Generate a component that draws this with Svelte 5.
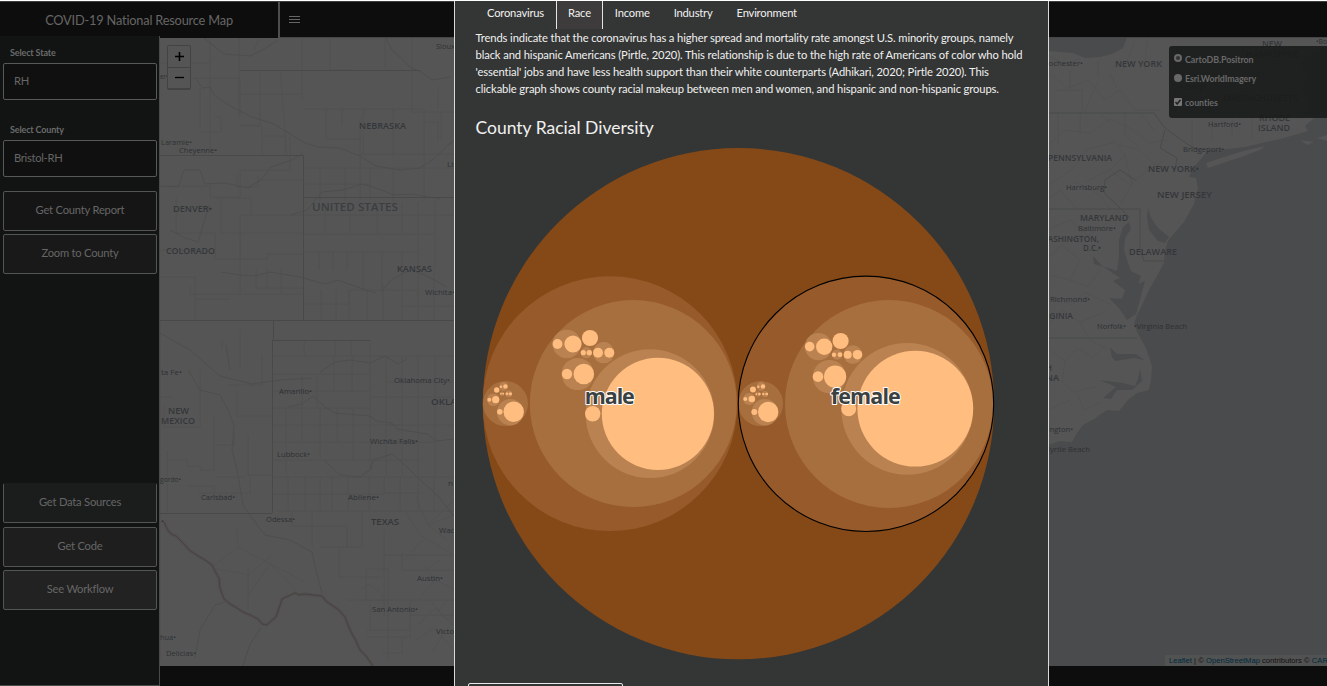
<script>
  const tabs = ['Coronavirus', 'Race', 'Income', 'Industry', 'Environment'];
  const lines = [
    'Trends indicate that the coronavirus has a higher spread and mortality rate amongst U.S. minority groups, namely',
    'black and hispanic Americans (Pirtle, 2020). This relationship is due to the high rate of Americans of color who hold',
    "'essential' jobs and have less health support than their white counterparts (Adhikari, 2020; Pirtle 2020). This",
    'clickable graph shows county racial makeup between men and women, and hispanic and non-hispanic groups.'
  ];

  const shades = ['#854918', '#965a2b', '#a86f3e', '#b98250', '#ffbd80'];

  // [cx, cy, r, depth]
  const circles = [
    [738.5, 403.7, 255.6, 0],
    [610, 403.7, 127.4, 1], [633.3, 403.6, 103.5, 2], [505.5, 403.6, 22.5, 2],
    [650, 413.7, 64.4, 3], [657.9, 413.8, 56.1, 4], [592.7, 413.8, 7.7, 4],
    [566.8, 344, 14.3, 3], [557.5, 344, 4.9, 4], [573, 344, 8.6, 4], [590, 338, 8.1, 4],
    [586.3, 352.7, 5.6, 3], [583.3, 352.7, 2.6, 4], [589.3, 352.7, 2.7, 4],
    [603.7, 352.7, 10.6, 3], [598, 352.7, 5, 4], [609.3, 352.7, 5, 4],
    [577.7, 374, 16.1, 3], [567, 374, 5.2, 4], [583.8, 374, 10.3, 4],
    [510.3, 412.2, 13.3, 3], [499.8, 411.8, 2.8, 4], [513.7, 411.8, 10.2, 4],
    [496.7, 390, 2.7, 4], [493.3, 399.7, 6.3, 3], [489.3, 399.8, 2, 4], [495.7, 399.7, 3.6, 4],
    [503.6, 386.4, 4.4, 3], [501, 386.7, 1.2, 4], [505.4, 386.4, 2.2, 4],
    [502, 393.7, 2.3, 3], [501, 393.7, 0.9, 4], [503.2, 393.7, 0.9, 4],
    [508.7, 393.8, 3.5, 3], [507, 393.8, 1.4, 4], [510.4, 393.8, 1.6, 4],
    [866, 403.8, 127.6, 1], [889, 404, 104, 2], [760.6, 403.6, 22.5, 2],
    [907.2, 408.8, 65.9, 3], [915.3, 408.7, 57.9, 4], [848.7, 408.7, 7.5, 4],
    [818.4, 346.6, 13.7, 3], [809.7, 346.6, 4.8, 4], [824.2, 346.8, 8.2, 4], [840.6, 341, 8.1, 4],
    [837, 354.7, 5.1, 3], [834, 354.7, 2.2, 4], [840, 354.7, 2.4, 4],
    [852.9, 354.7, 9.4, 3], [847.7, 354.7, 4, 4], [857.5, 354.7, 4.8, 4],
    [829.4, 376.6, 16.7, 3], [818, 376.6, 5.3, 4], [835.1, 376.6, 11.1, 4],
    [765, 412.2, 13.2, 3], [754.3, 412, 3, 4], [768.2, 412, 10.2, 4],
    [753, 389.5, 3, 4], [749.2, 399, 6.1, 3], [745.3, 399, 2, 4], [751.8, 399, 3.3, 4],
    [761, 386.4, 4.3, 3], [758.3, 386.7, 1.2, 4], [763, 386.4, 2.2, 4],
    [757.7, 394.1, 2.6, 3], [756.3, 394.1, 0.9, 4], [759.4, 394.1, 1.4, 4],
    [765, 394.1, 3.1, 3], [763.3, 394.1, 1.2, 4], [766.7, 394.1, 1.4, 4]
  ];

  // [text, x, baseline, width, kind]
  const labels = [
    ['Laramie•', 161, 145, 31, 's'], ['Cheyenne•', 179, 153, 38, 's'], ['er•', 160, 79, 8, 's'],
    ['NEBRASKA', 359, 128.5, 47, 'm'], ['Sioux', 436, 49, 19, 's'], ['Lin', 447, 167, 11, 's'],
    ['DENVER•', 173, 211.5, 39, 'm'], ['COLORADO', 166, 254, 49, 'm'],
    ['UNITED STATES', 312, 211, 86, 'l'], ['KANSAS', 397, 272, 35, 'm'], ['Wichita•', 425, 295, 30, 's'],
    ['ta Fe•', 161, 375, 21, 's'], ['Amarillo•', 279, 393.5, 33, 's'], ['Oklahoma City•', 394, 383, 56, 's'],
    ['OKLAHOMA', 431, 404.5, 56, 'm'], ['NEW', 168, 413.5, 21, 'm'], ['MEXICO', 161, 423.5, 34, 'm'],
    ['Wichita Falls•', 370, 443.5, 48, 's'], ['Lubbock•', 277, 457, 33, 's'], ['gordo•', 160, 482, 21, 's'],
    ['Carlsbad•', 201, 500, 34, 's'], ['Abilene•', 348, 499.5, 31, 's'], ['n', 448, 486, 5, 's'],
    ['Odessa•', 266, 522, 29, 's'], ['TEXAS', 371, 524.5, 28, 'm'], ['Waco', 439, 533, 20, 's'],
    ['Austin•', 417, 580.5, 26, 's'], ['San Antonio•', 372, 612, 46, 's'], ['Victoria', 436, 633.5, 28, 's'],
    ['hua•', 160, 640, 16, 's'], ['Delicias•', 166, 656, 30, 's'], ['•', 161, 524, 3, 's'],
    ['Rochester•', 1044, 66, 39, 's'], ['NEW YORK', 1115, 66.5, 47, 'm'], ['NEW', 1262, 46.5, 20, 'm'],
    ['HAMPSHIRE', 1246, 57, 52, 'm'], ['•Bo', 1316, 44, 11, 's'], ['Albany•', 1179, 88.5, 27, 's'],
    ['MASSACHUSETTS', 1223, 101, 75, 'm'], ['RHODE', 1259, 120.5, 31, 'm'], ['ISLAND', 1258, 130.5, 32, 'm'],
    ['Hartford•', 1208, 126.5, 33, 's'], ['Bridgeport•', 1183, 152, 41, 's'], ['PENNSYLVANIA', 1048, 160.5, 64, 'm'],
    ['NEW YORK•', 1148, 171.5, 51, 'm'], ['Harrisburg•', 1066, 190, 41, 's'], ['NEW JERSEY', 1157, 198, 55, 'm'],
    ['MARYLAND', 1080, 221, 48, 'm'], ['Baltimore•', 1078, 230.5, 38, 's'], ['WASHINGTON,', 1040, 242, 59, 'm'],
    ['D.C.•', 1083, 251, 18, 'm'], ['DELAWARE', 1129, 254.5, 48, 'm'], ['Richmond•', 1050, 301.5, 40, 's'],
    ['VIRGINIA', 1036, 318.5, 37, 'm'], ['Norfolk•', 1097, 329, 29, 's'], ['•Virginia Beach', 1134, 329, 53, 's'],
    ['NORTH', 1024, 371, 28, 'm'], ['CAROLINA', 1013, 381, 46, 'm'], ['Wilmington•', 1030, 432, 43, 's'], ['Myrtle Beach', 1043, 452, 47, 's']
  ];
  const sizes = { s: 7.4, m: 8.2, l: 10 };

  const counties = [
    'M160 63H210M210 38V150M239 38V117M259 38L254 50M302 38V100M330 38V70H353M360 117V200M385 38V68M412 38V112H454M160 78H240V117M215 117H221V132H200M200 88V128M260 70V125H240M280 70L287 155M240 94H300M240 126H262V155M303 109H424V155M326 109V139H362M342 109V126M363 109V155M393 110V155M361 154H454M424 122H438V141M441 112V140M438 89V110M262 136H285V155',
    'M168 186H210V197H240V170H290V137M237 175V187H258V176M176 197V233H215V259H240V215H251V198H216M221 198V233H303M251 215H303M260 180H303M240 233V294M160 250H198M240 259H267V254H303M256 268V288H303M267 268V288M281 268V293M190 286V294H303M160 277H195V320M195 299H230M160 320V660',
    'M320 167V201M345 167V201M370 167V200M304 168H454M304 184H370M393 168V201M424 155V201M304 215H454M325 202V234M350 202V234M377 202V234M402 202V234M418 202V252H304M304 234H434M435 201V268M319 252V270M333 252V270M347 252V270M363 252V290M382 252V290M402 252V320M418 252V290H349V304H304M321 290V320M336 290V320M349 290V320M367 290V320M383 285V320M400 306H454M418 290V320M434 271V320',
    'M273 356H454M335 340V356M351 340V356M370 340V470M304 340V355M273 374H370M302 374V408M317 374V408M334 357V392M352 357V392M273 391H370M273 408H370M286 409V477M302 409V442M320 409V459M337 409V442M353 409V459M273 425H402M273 442H370M273 460H420M273 477H454M386 357V477M402 357V477M418 357V511M435 357V477M386 382H454M370 397H454M386 425H454M386 442H435',
    'M288 477V511M305 477V511M320 477V511M332 477V511M348 477V511M369 477V510M384 477V493H420M400 477V511M434 477V511M273 494H384M277 511H454M292 511V526H328M312 511V548M328 526H347V548M362 511V547H320M347 530V548M384 530V616M339 547V577H382M366 570V600H388V569H366M402 553V570H454M382 555H454M347 600H454M388 600V660M366 630H410M366 637H410V600M410 615H454M370 605V630M402 637V653H382',
    'M164 405V427H200V392M240 330V368M222 340V350M262 355V385H228M200 370V397M214 415V470H200V466H187V460H167M167 450V512M237 390V416H272M216 445H234V432M160 397H173M248 435V475H273M198 493H250V474M215 477H246M187 486H214V496H237'
  ];
  const diagonals = [
    'M248 596L270 564L298 591M237 528L238 547L212 567M238 547L305 582M248 567V610M213 568L248 575L272 555M405 511L420 535L454 555M415 495L428 525L447 540M423 540L404 560M428 525L454 515M418 600L435 580L454 589M435 580L423 565M430 600L447 620L454 614M418 625L435 608L454 625M416 640L434 628L454 650M432 653L443 635M440 560L425 570M447 600L437 612M433 520L454 500M360 590L369 584L382 594V600'
  ];
  const rivers = [
    'M196 78L202 88L210 87L214 95L232 107L252 117L274 124L292 135L305 143L318 147L340 148L360 156L376 166L400 170L420 168L435 158L449 144L457 139',
    'M160 186L178 187L184 170L200 170L205 184L225 183L248 188L261 180L271 167L292 160L303 153M209 205L202 229L198 242L185 238L170 230',
    'M291 215L307 210L322 192L343 190L362 184L376 188L394 195L412 194L440 199',
    'M221 272L240 275L255 276L270 272L300 277L325 284L338 280L357 287L376 293M381 292L391 280L410 270L425 275L447 287',
    'M204 38L224 54L250 56L264 49L278 40M386 38L392 50L400 57L410 67L421 72L432 80L450 77',
    'M226 345L230 370M188 370L200 390L220 395L228 410L234 425L232 450L237 470L243 505L257 525L265 535L290 540L312 552L315 567L322 593',
    'M160 333L190 350L220 376L252 384L280 380L312 378M288 407L302 404L313 396L325 407L335 413L370 416L376 421L392 423L397 429L427 434L437 441L454 439',
    'M324 460L340 475L360 477L371 469L373 460L392 454L405 465L417 477L436 494L454 516',
    'M195 658L200 630L215 605L225 602M261 628L250 644L243 666M320 372L335 362L350 360L370 363L385 356L398 364L407 359'
  ];
  const eastLines = [
    'M1048 72L1068 88L1088 80L1105 100L1120 90L1135 110L1160 110M1048 145L1065 130L1090 133L1110 119L1130 128L1150 143L1168 140M1058 112V145M1080 113V134M1100 114L1110 122M1048 185L1072 170L1085 150L1115 142L1125 155L1110 170L1085 182M1110 170L1130 185L1145 172L1165 160M1118 145L1140 150L1160 170M1125 155L1132 185L1120 205M1048 200L1060 190L1076 208M1075 182L1100 195L1110 209',
    'M1048 230L1070 220L1088 236L1105 225M1048 258L1062 245L1080 260L1070 280L1050 275M1070 280L1088 287L1100 270M1048 295L1072 305L1085 292L1112 305M1048 325L1062 310L1080 322L1105 312M1080 322L1090 340L1107 349M1049 350L1065 361L1062 381L1073 392L1098 386M1065 361L1078 348L1093 358L1105 345M1078 395L1084 410L1100 402M1048 410L1070 400M1098 61V76M1110 73L1117 88M1097 83L1085 111M1192 120V147M1212 120V140M1232 118V138M1252 118V138',
    'M1135 41L1122 72M1147 38L1145 70M1048 55L1066 65L1080 58M1056 90H1082V112M1070 70V90M1125 112V135L1140 148M1140 112L1155 132'
  ];
  const rioGrande = 'M164 522L167 529L171 534L176 536L183 543L189 550L198 556L205 560L212 565L216 573L219 578L220 588L224 599L230 604L237 608L243 612L250 615L258 619L262 624L267 625L271 621L276 617L279 608L282 599L286 597L295 593L299 595L304 594L313 595L322 596L327 602L333 606L339 610L345 617L348 625L351 632L356 641L360 650L366 656L373 666';
</script>

<div class="page">
  <header>
    <div class="brand">COVID-19 National Resource Map</div>
    <button class="burger" aria-label="Menu">
      <svg width="11" height="9" viewBox="0 0 11 9"><path d="M0 1.500H11M0 4.500H11M0 7.500H11" stroke="#666" stroke-width="1" /></svg>
    </button>
  </header>

  <div class="body">
    <aside>
      <span class="field-label">Select State</span>
      <div class="input">RH</div>
      <span class="field-label second">Select County</span>
      <div class="input">Bristol-RH</div>
      <button class="btn first">Get County Report</button>
      <button class="btn lighter">Zoom to County</button>
      <div class="links">
        <button class="btn l1">Get Data Sources</button>
        <button class="btn l2">Get Code</button>
        <button class="btn l3">See Workflow</button>
      </div>
    </aside>

    <section class="map">
      <svg class="tiles" viewBox="160 38 1167 628" width="1167" height="628">
        <rect x="160" y="38" width="1167" height="628" fill="#555" />
        <g class="county">
          {#each [...counties, ...diagonals, ...eastLines] as d}<path {d} />{/each}
        </g>
        <g class="river">
          {#each rivers as d}<path {d} />{/each}
        </g>
        <path class="state" d="M240 70.500H420M160 155.500H303.500V320M303.500 197.500H454M160 320.500H454M273.500 320V340M272.500 340.500H370M272.500 340V513M160 513.500H272" />
        <path class="glow" d={rioGrande} />
        <path class="rio" d={rioGrande} />

        <path class="water" d="M1327 118L1314 118L1305 126L1308 131L1298 134L1280 139L1262 143L1245 147L1227 149L1208 150L1202 158L1193 168L1189 177L1196 178L1198 188L1194 204L1184 222L1172 236L1168 241L1165 250L1164 263L1157 276L1149 290L1143 303L1137 315L1134 324L1138 334L1146 348L1152 366L1151 380L1149 390L1137 393L1128 400L1119 411L1107 410L1094 419L1083 425L1077 433L1072 442L1060 441L1048 445V666H1327Z" />
        <path class="water" d="M1048 38H1127L1123 48L1112 54L1100 57L1085 58L1073 53L1048 51ZM1327 46L1310 53L1300 64L1307 76L1302 88L1310 102L1304 111L1313 116L1327 110Z" />
        <path class="water" d="M1148 208L1151 218L1158 228L1169 237L1165 243L1158 241L1149 230L1147 217ZM1129 222L1131 229L1125 238L1124 250L1128 263L1131 271L1141 276L1138 284L1145 281L1141 296L1136 314L1127 320L1119 308L1109 298L1122 299L1125 290L1113 281L1120 278L1104 267L1094 264L1093 256L1102 266L1117 271L1119 255L1119 240L1123 227ZM1110 347L1117 354L1136 354L1144 360L1134 358L1115 361L1112 357ZM1140 369L1142 381L1132 390L1117 390L1111 399L1103 398L1116 387L1100 380L1122 383L1135 386L1138 379Z" />
        <path class="land" d="M1206 163L1218 159L1243 151L1265 146L1260 150L1244 156L1226 162L1208 168ZM1300 140L1314 142L1307 145ZM1317 138L1327 135V141Z" />
        <path class="coast" d="M1048 113H1154L1165 128L1180 139L1192 147L1200 150M1048 209H1140M1140 209V250L1144 261H1164M1104 193L1119 207L1130 218M1104 193L1105 180L1120 170L1135 180M1165 130L1160 148L1177 158L1175 170M1048 338H1137" />
        <g class="names">
          {#each labels as [text, x, y, w, kind]}
            <text {x} {y} textLength={w} lengthAdjust="spacingAndGlyphs" font-size={sizes[kind]} class={kind}>{text}</text>
          {/each}
        </g>
      </svg>

      <div class="zoom">
        <button aria-label="Zoom in"><svg width="9" height="9"><path d="M4.500 0V9M0 4.500H9" stroke="#000" stroke-width="1.600" /></svg></button>
        <button aria-label="Zoom out"><svg width="9" height="9"><path d="M0 4.500H9" stroke="#000" stroke-width="1.300" /></svg></button>
      </div>

      <div class="layers">
        <div class="layer"><i class="radio on"></i>CartoDB.Positron</div>
        <div class="layer"><i class="radio"></i>Esri.WorldImagery</div>
        <div class="layer last">
          <i class="check"><svg width="8" height="8" viewBox="0 0 8 8"><path d="M1.500 4L3.200 6L6.500 1.800" fill="none" stroke="#222" stroke-width="1.500" /></svg></i>counties
        </div>
      </div>

      <div class="credit"><b>Leaflet</b> | © <b>OpenStreetMap</b> contributors © <b>CARTO</b></div>
    </section>
  </div>

  <div class="modal">
    <nav>
      {#each tabs as tab, i}
        <span class="tab" class:active={i === 1}>{tab}</span>
      {/each}
    </nav>
    <div class="copy">
      {#each lines as line}<span class="line">{line}</span>{/each}
    </div>
    <h2>County Racial Diversity</h2>
    <svg class="pack" viewBox="476 141 540 525" width="540" height="525">
      {#each circles as [cx, cy, r, depth]}
        <circle {cx} {cy} {r} fill={shades[depth]} />
      {/each}
      <circle cx="866" cy="403.800" r="127.700" fill="none" stroke="#000" stroke-width="1.100" />
      <text x="609.800" y="404" textLength="50">male</text>
      <text x="865.800" y="404" textLength="70">female</text>
    </svg>
    <div class="select"></div>
  </div>
</div>

<style>
  :global(body) { margin: 0; overflow: hidden; background: #0d0d0d; }
  * { box-sizing: border-box; }
  button { font: inherit; padding: 0; margin: 0; }
  .page {
    position: relative;
    width: 1327px;
    height: 686px;
    overflow: hidden;
    display: flex;
    flex-direction: column;
    background: #0d0d0d;
    border-top: 1px solid #fff;
    font-family: Lato, "Liberation Sans", sans-serif;
    color: #666;
  }
  header { display: flex; height: 37px; flex: none; border-top: 1px solid #3c3f3e; }
  .brand {
    width: 280px;
    border-right: 2px solid #4d4f4e;
    text-align: center;
    font-size: 12.800px;
    letter-spacing: -0.200px;
    line-height: 36px;
  }
  .burger {
    flex: 1;
    border: 0;
    border-bottom: 1px solid #464646;
    background: none;
    display: flex;
    align-items: center;
    padding-left: 9px;
  }
  .body { display: flex; flex: 1; min-height: 0; }
  aside {
    width: 160px;
    margin-top: -2px;
    padding: 11px 2px 0 3px;
    display: flex;
    flex-direction: column;
    background: #111413;
    border-right: 1px solid #474b4a;
    border-bottom: 1px solid #474b4a;
  }
  .field-label { font-size: 9px; font-weight: 700; letter-spacing: -0.150px; line-height: 12px; padding-left: 7px; color: #6b6b6b; }
  .field-label.second { margin-top: 24px; }
  .input {
    height: 37px;
    margin-top: 4px;
    padding-left: 10px;
    border: 1px solid #565958;
    border-radius: 2px;
    background: #101010;
    font-size: 11.200px;
    letter-spacing: -0.300px;
    line-height: 34px;
  }
  .btn {
    width: 100%;
    height: 40px;
    flex: none;
    padding-bottom: 2px;
    border: 1px solid #525554;
    border-radius: 2px;
    background: #151515;
    color: #666;
    font-size: 11.200px;
    letter-spacing: -0.220px;
    line-height: 36px;
    text-align: center;
  }
  .first { margin-top: 14px; }
  .lighter { background: #191919; margin-top: 3px; }
  .links { margin-top: auto; margin-bottom: 75px; display: flex; flex-direction: column; gap: 3px; }
  .l1 { background: #1b1d1c; border-top-color: #1b1d1c; margin: -1px 0 1px; }
  .l2 { background: #1e1e1e; }
  .l3 { background: #222; }

  .map { position: relative; width: 1167px; height: 628px; }
  .tiles { display: block; }
  .tiles path { fill: none; }
  .county path { stroke: #515151; stroke-width: 0.900; }
  .river path { stroke: #4c4d4e; stroke-width: 0.900; stroke-linejoin: round; }
  .tiles .state { stroke: #494949; stroke-width: 1; }
  .tiles .glow { stroke: #524f4e; stroke-width: 3; stroke-linejoin: round; }
  .tiles .rio { stroke: #484342; stroke-width: 1; }
  .tiles .water { fill: #4a4b4c; }
  .tiles .land { fill: #555; }
  .tiles .coast { stroke: #494a4b; }
  .names { font-family: "Open Sans", sans-serif; fill: #2d3134; }
  .names .m { font-weight: 600; fill: #34373a; }
  .names .l { font-weight: 600; fill: #3b3e41; }

  .zoom {
    position: absolute;
    left: 7px;
    top: 7px;
    width: 24px;
    height: 45px;
    display: flex;
    flex-direction: column;
    border: 1px solid #434343;
    border-width: 1px 1px 2px;
    border-radius: 2px;
  }
  .zoom button {
    flex: 1;
    border: 0;
    background: #555;
    display: grid;
    place-items: center;
  }
  .zoom button + button { border-top: 1px solid #434343; }
  .layers {
    position: absolute;
    left: 1009px;
    top: 8px;
    width: 170px;
    height: 72px;
    padding: 3px 0 0 5px;
    border-radius: 3px;
    background: rgba(24, 26, 25, 0.880);
    font-size: 8.900px;
    font-weight: 700;
    letter-spacing: -0.080px;
    color: #696969;
  }
  .layer { display: flex; align-items: center; gap: 3px; height: 20px; }
  .layer + .layer { height: 19px; }
  .layer.last { margin-top: 5px; }
  .radio { width: 8px; height: 8px; border-radius: 50%; background: #686868; margin-top: -2px; }
  .radio.on { border: 2px solid #686868; background: #333; }
  .check { width: 8px; height: 8px; border-radius: 1px; background: #777; display: flex; margin-top: -2px; }
  .credit {
    position: absolute;
    right: 0;
    bottom: 0;
    width: 162px;
    height: 11px;
    padding-left: 4px;
    overflow: hidden;
    white-space: nowrap;
    background: #515252;
    color: #111;
    font: 7.650px/12px "Liberation Sans", sans-serif;
  }
  .credit b { font-weight: 400; color: #00293b; }

  .modal {
    position: absolute;
    left: 454px;
    top: 0;
    width: 595px;
    height: 686px;
    background: #343635;
    border-left: 1px solid #d8dbd9;
    border-right: 1px solid #d8dbd9;
    color: #f0f0f0;
  }
  nav { display: flex; height: 28px; padding-left: 20px; }
  .tab { padding: 0 11px; border: solid transparent; border-width: 0 1px; font-size: 11.200px; letter-spacing: -0.200px; line-height: 24px; }
  .tab.active { border-color: #e4e4e4; background: #3d3b3b; }
  .copy {
    padding: 0 0 0 20.500px;
    display: flex;
    flex-direction: column;
    height: 68px;
    font-size: 11.200px;
    letter-spacing: -0.110px;
    line-height: 17px;
  }
  .line { white-space: nowrap; }
  h2 { margin: 19px 0 0 20.500px; font-size: 17.500px; font-weight: 400; line-height: 24px; height: 25px; }
  .pack { display: block; margin-left: 21px; }
  .pack text {
    font: 700 21.500px "Open Sans", sans-serif;
    text-anchor: middle;
    fill: #3b4140;
    stroke: #fff;
    stroke-width: 2px;
    stroke-linejoin: round;
    paint-order: stroke;
  }
  .select { margin: 17px 0 0 13px; width: 155px; height: 30px; border: 1px solid #e8e8e8; border-radius: 2px; }
</style>
